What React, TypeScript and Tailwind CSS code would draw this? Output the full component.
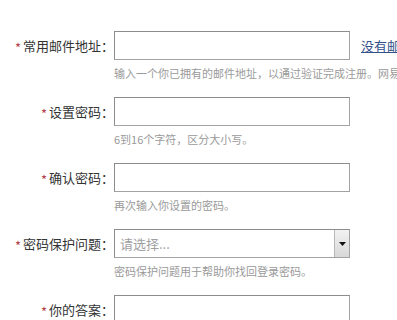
import { useState } from "react";

const font = { fontFamily: '"Noto Sans CJK SC", "Noto Sans", sans-serif' };

type Field = {
  label: string;
  hint: string;
  kind: "text" | "password" | "select";
};

const fields: Field[] = [
  { label: "常用邮件地址：", hint: "输入一个你已拥有的邮件地址，以通过验证完成注册。网易免费邮箱", kind: "text" },
  { label: "设置密码：", hint: "6到16个字符，区分大小写。", kind: "password" },
  { label: "确认密码：", hint: "再次输入你设置的密码。", kind: "password" },
  { label: "密码保护问题：", hint: "密码保护问题用于帮助你找回登录密码。", kind: "select" },
  { label: "你的答案：", hint: "", kind: "text" },
];

function Label({ text }: { text: string }) {
  return (
    <label className="w-[114px] shrink-0 text-right text-[13px] leading-[29px] text-[#333] whitespace-nowrap">
      <span className="inline-block mr-[2px] text-[13px] text-[#b5434b] translate-y-[2px]">*</span>
      {text}
    </label>
  );
}

function SelectBox() {
  const [value] = useState("");
  return (
    <div className="flex h-[29px] w-[236px] border border-[#a3a3a3] border-t-[#8c8c8c] border-l-[#8c8c8c] bg-white">
      <span className="flex-1 pl-[5px] text-[13px] leading-[27px] text-[#a0a0a0]">
        {value || "请选择..."}
      </span>
      <span className="flex w-[15px] items-center justify-center border-l border-[#b8b8b8] bg-gradient-to-b from-[#f2f2f2] to-[#d8d8d8]">
        <svg width="7" height="4" viewBox="0 0 7 4">
          <path d="M0 0h7L3.5 4z" fill="#111" />
        </svg>
      </span>
    </div>
  );
}

export default function App() {
  return (
    <div className="relative w-[397px] h-[320px] overflow-hidden bg-white" style={font}>
      <div className="flex flex-col pt-[31px]">
        {fields.map((f, i) => (
          <div key={i} className="flex items-start h-[66px] shrink-0">
            <Label text={f.label} />
            <div className="flex flex-col">
              <div className="flex items-center">
                {f.kind === "select" ? (
                  <SelectBox />
                ) : (
                  <input
                    type={f.kind}
                    className="h-[29px] w-[236px] border border-[#a3a3a3] border-t-[#8c8c8c] border-l-[#8c8c8c] bg-white outline-none"
                  />
                )}
                {i === 0 && (
                  <a
                    href="#"
                    className="ml-[11px] text-[13px] text-[#34508a] underline whitespace-nowrap"
                  >
                    没有邮箱？
                  </a>
                )}
              </div>
              {f.hint && (
                <p className="mt-[6px] text-[11px] leading-[14px] text-[#9a9a9a] whitespace-nowrap">
                  {f.hint}
                </p>
              )}
            </div>
          </div>
        ))}
      </div>
    </div>
  );
}
